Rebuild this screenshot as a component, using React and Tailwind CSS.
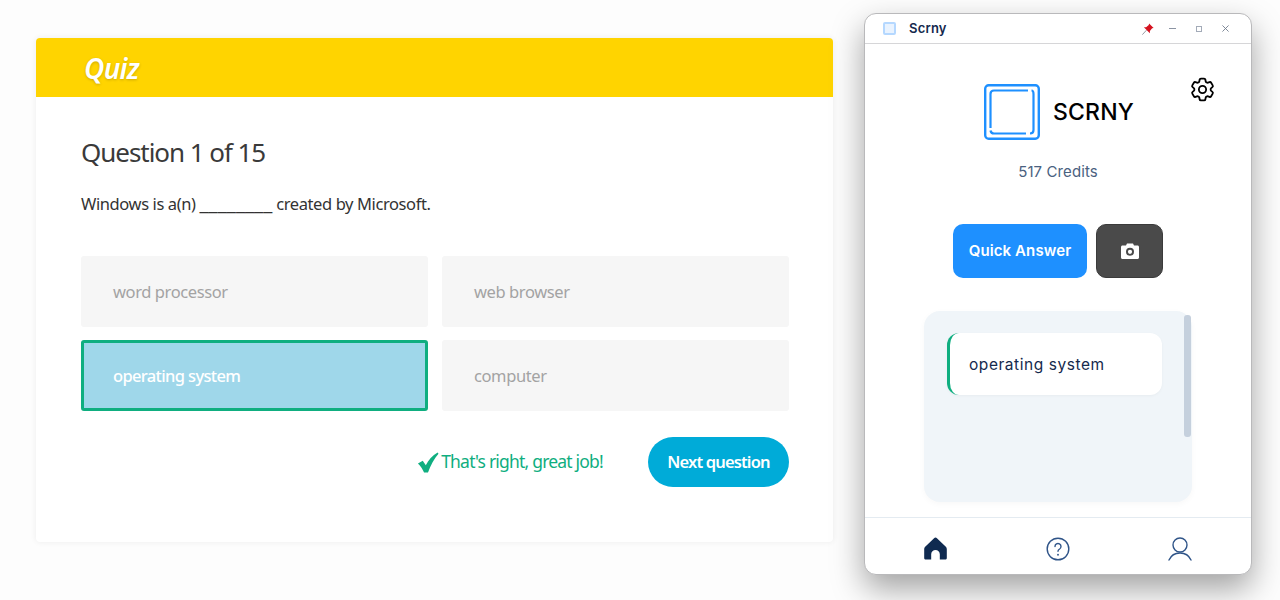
const SANS = "font-['Noto_Sans','Open_Sans',sans-serif]";

const ANSWERS = [
    {label: "word processor"},
    {label: "web browser"},
    {label: "operating system", correct: true},
    {label: "computer"},
];

function Answer({label, correct}) {
    if (correct)
        return (
            <div className="h-[71px] rounded-[3px] border-[3px] border-[#0fae80] bg-[#9fd7ea] pl-[29px] pt-[2px] flex items-center text-[16.5px] font-medium tracking-[-0.65px] text-white">
                {label}
            </div>
        );

    return (
        <div className="h-[71px] rounded-[3px] bg-[#f6f6f6] pl-[32px] pt-[2px] flex items-center text-[16.5px] tracking-[-0.4px] text-[#a3a3a3]">
            {label}
        </div>
    );
}

function Quiz() {
    return (
        <div className={`ml-[36px] mt-[38px] w-[797px] h-[504px] rounded-[4px] bg-white shadow-[0_0_6px_rgba(0,0,0,0.07)] overflow-hidden ${SANS}`}>
            <div className="h-[59px] bg-[#ffd400] pl-[48px] flex items-center">
                <span className="text-[28px] font-semibold italic tracking-[-0.7px] text-white [text-shadow:0_1px_3px_rgba(0,0,0,0.2)]">Quiz</span>
            </div>

            <div className="pl-[45px] pr-[44px] pt-[36px]">
                <div className="text-[26px] leading-[38px] tracking-[-1.05px] text-[#3a3a3a]">Question 1 of 15</div>
                <div className="mt-[21px] h-[24px] text-[16.5px] leading-[24px] tracking-[-0.4px] text-[#333]">
                    Windows is a(n) <span className="text-[20.5px] leading-none tracking-[0px]">________</span> created by Microsoft.
                </div>

                <div className="mt-[40px] grid grid-cols-2 gap-x-[14px] gap-y-[13px]">
                    {ANSWERS.map(answer => <Answer key={answer.label} {...answer}/>)}
                </div>

                <div className="mt-[26px] flex items-center justify-end">
                    <svg viewBox="0 0 24 24" className="w-[22px] h-[21px] mr-[2px] fill-[#0fae80]">
                        <path d="M0.5 13 L6 10 L9.5 15 C12.5 9 17 4 23 0.5 L24 2 C19 8 15 15 12 23.5 L7.5 23.5 C6 19.5 3.5 16 0.5 13 Z"/>
                    </svg>
                    <span className="pb-[2px] text-[17.5px] tracking-[-0.8px] text-[#0fae80]">That's right, great job!</span>
                    <button className="ml-[45px] w-[141px] h-[50px] rounded-full bg-[#00abd8] text-[16.5px] font-semibold tracking-[-0.85px] text-white">
                        Next question
                    </button>
                </div>
            </div>
        </div>
    );
}

function TitleBar() {
    return (
        <div className="h-[30px] border-b border-[#d6d6d8] flex items-center pl-[18px] pr-[22px]">
            <div className="w-[13px] h-[13px] rounded-[2px] border-2 border-[#b5d8ff] bg-[#e9f3ff]"/>
            <span className="ml-[13px] text-[13px] font-semibold tracking-[0.2px] text-[#14294d]">Scrny</span>

            <div className="ml-auto flex items-center">
                <svg viewBox="0 0 16 16" className="w-[12px] h-[12px]">
                    <path d="M0.5 15.5 L6 9.5" stroke="#8a8f99" strokeWidth="1.2"/>
                    <path d="M9.5 0.5 L15.5 6.5 L13.5 7 L10.5 10.5 L10.5 13.5 L2.5 5.5 L5.5 5.5 L9 2.5 Z" fill="#d5121f"/>
                </svg>
                <div className="ml-[15px] w-[7px] h-[1px] bg-[#8b94a3]"/>
                <div className="ml-[20px] w-[6px] h-[6px] border border-[#a3abb8]"/>
                <svg viewBox="0 0 8 8" className="ml-[20px] w-[7px] h-[7px] stroke-[#6f7a8c]">
                    <path d="M0.5 0.5 L7.5 7.5 M7.5 0.5 L0.5 7.5" strokeWidth="1"/>
                </svg>
            </div>
        </div>
    );
}

function Logo() {
    return (
        <svg viewBox="0 0 56 56" className="w-[56px] h-[56px] fill-none stroke-[#1e90ff]">
            <rect x="1.2" y="1.2" width="53.6" height="53.6" rx="3.5" strokeWidth="2.4"/>
            <path d="M44 6.5 H10 Q6.5 6.5 6.5 10 V44 M6.5 46.5 Q7 49.5 10 49.5 H42 M46 49.5 Q49.5 49.5 49.5 46 V10 Q49.5 6.5 47.5 6.5" strokeWidth="2.2"/>
        </svg>
    );
}

function Gear() {
    return (
        <svg viewBox="0 0 24 24" className="w-[29px] h-[29px] fill-none stroke-black" strokeWidth="1.5" strokeLinecap="round" strokeLinejoin="round">
            <path d="M9.594 3.94c.09-.542.56-.94 1.11-.94h2.593c.55 0 1.02.398 1.11.94l.213 1.281c.063.374.313.686.645.87.074.04.147.083.22.127.324.196.72.257 1.075.124l1.217-.456a1.125 1.125 0 011.37.49l1.296 2.247a1.125 1.125 0 01-.26 1.431l-1.003.827c-.293.24-.438.613-.431.992a6.759 6.759 0 010 .255c-.007.378.138.75.43.99l1.005.828c.424.35.534.954.26 1.43l-1.298 2.247a1.125 1.125 0 01-1.369.491l-1.217-.456c-.355-.133-.75-.072-1.076.124a6.57 6.57 0 01-.22.128c-.331.183-.581.495-.644.869l-.213 1.28c-.09.543-.56.941-1.11.941h-2.594c-.55 0-1.02-.398-1.11-.94l-.213-1.281c-.062-.374-.312-.686-.644-.87a6.52 6.52 0 01-.22-.127c-.325-.196-.72-.257-1.076-.124l-1.217.456a1.125 1.125 0 01-1.369-.49l-1.297-2.247a1.125 1.125 0 01.26-1.431l1.004-.827c.292-.24.437-.613.43-.992a6.932 6.932 0 010-.255c.007-.378-.138-.75-.43-.99l-1.004-.828a1.125 1.125 0 01-.26-1.43l1.297-2.247a1.125 1.125 0 011.37-.491l1.216.456c.356.133.751.072 1.076-.124.072-.044.146-.087.22-.128.332-.183.582-.495.644-.869l.214-1.281z"/>
            <path d="M15 12a3 3 0 11-6 0 3 3 0 016 0z"/>
        </svg>
    );
}

function BottomNav() {
    return (
        <div className="mt-[15px] h-[58px] border-t border-[#e4ebf1] flex items-center justify-between pl-[59px] pr-[59px] pt-[4px]">
            <svg viewBox="0 0 24 24" className="w-[23px] h-[23px] fill-[#0f2a50]">
                <path d="M12 0.5 C12.6 0.5 13 0.8 13.5 1.3 L22.5 10 C23.3 10.8 23.8 11.6 23.8 12.8 V21.8 C23.8 22.8 23 23.5 22 23.5 H16.5 V18 C16.5 15.4 14.5 13.5 12 13.5 C9.5 13.5 7.5 15.4 7.5 18 V23.5 H2 C1 23.5 0.2 22.8 0.2 21.8 V12.8 C0.2 11.6 0.7 10.8 1.5 10 L10.5 1.3 C11 0.8 11.4 0.5 12 0.5 Z"/>
            </svg>
            <svg viewBox="0 0 24 24" className="w-[24px] h-[24px] fill-none stroke-[#2f5488]" strokeWidth="1.4" strokeLinecap="round">
                <circle cx="12" cy="12" r="10.8"/>
                <path d="M9 9.5a3 3 0 1 1 4.6 2.5c-1 .6-1.6 1.2-1.6 2.3"/>
                <path d="M12 17.6v.2" strokeWidth="1.8"/>
            </svg>
            <svg viewBox="0 0 24 24" className="w-[24px] h-[24px] fill-none stroke-[#2f5488]" strokeWidth="1.4" strokeLinecap="round">
                <circle cx="12" cy="8" r="7"/>
                <path d="M1 23 C3 18.5 7 16 12 16 C17 16 21 18.5 23 23"/>
            </svg>
        </div>
    );
}

function Scrny() {
    return (
        <div className="ml-[31px] mt-[13px] w-[388px] h-[562px] rounded-[12px] bg-white border border-[#b9b9bb] shadow-[0_14px_32px_rgba(0,0,0,0.36)] font-['Inter','Open_Sans',sans-serif]">
            <TitleBar/>

            <div className="relative pt-[40px]">
                <div className="absolute top-[31px] right-[34px]">
                    <Gear/>
                </div>

                <div className="flex items-center justify-center pl-[2px]">
                    <Logo/>
                    <span className="ml-[13px] pt-[1px] text-[23px] font-medium tracking-[0.2px] text-black">SCRNY</span>
                </div>

                <div className="mt-[21px] text-center text-[15px] leading-[22px] tracking-[0.1px] text-[#4a6180]">517 Credits</div>

                <div className="mt-[41px] flex justify-center gap-[9px]">
                    <button className="w-[134px] h-[54px] rounded-[10px] bg-[#1e90ff] pt-[1px] text-[15px] font-semibold tracking-[0.1px] text-white">
                        Quick Answer
                    </button>
                    <button className="w-[67px] h-[54px] rounded-[10px] bg-[#4a4a4a] border border-[#3b3b3b] flex items-center justify-center">
                        <svg viewBox="0 0 20 20" className="w-[20px] h-[20px]">
                            <path fillRule="evenodd" fill="#fff" d="M7 2.5 H13 L14 4.5 H17.5 C18.3 4.5 19 5.2 19 6 V16.5 C19 17.3 18.3 18 17.5 18 H2.5 C1.7 18 1 17.3 1 16.5 V6 C1 5.2 1.7 4.5 2.5 4.5 H6 Z M10 6.8 A4 4 0 1 0 10 14.8 A4 4 0 1 0 10 6.8 Z M10 8.7 A2.1 2.1 0 1 1 10 12.9 A2.1 2.1 0 1 1 10 8.7 Z"/>
                        </svg>
                    </button>
                </div>

                <div className="relative mt-[33px] mx-[59px] h-[191px] rounded-[16px] bg-[#f0f5f9] pt-[22px] pl-[23px] shadow-[0_2px_6px_rgba(0,0,0,0.03)]">
                    <div className="w-[215px] h-[62px] rounded-[12px] bg-white border-l-[3px] border-[#0fae80] pl-[19px] pt-[1px] flex items-center text-[15.5px] tracking-[0.55px] text-[#14294d] shadow-[0_1px_3px_rgba(0,0,0,0.04)]">
                        operating system
                    </div>
                    <div className="absolute top-[4px] right-[1px] w-[7px] h-[122px] rounded-[3px] bg-[#c5d0dd]"/>
                </div>

                <BottomNav/>
            </div>
        </div>
    );
}

export default function App() {
    return (
        <div className="w-[1280px] h-[600px] bg-[#fdfdfd] flex items-start overflow-hidden">
            <Quiz/>
            <Scrny/>
        </div>
    );
}
